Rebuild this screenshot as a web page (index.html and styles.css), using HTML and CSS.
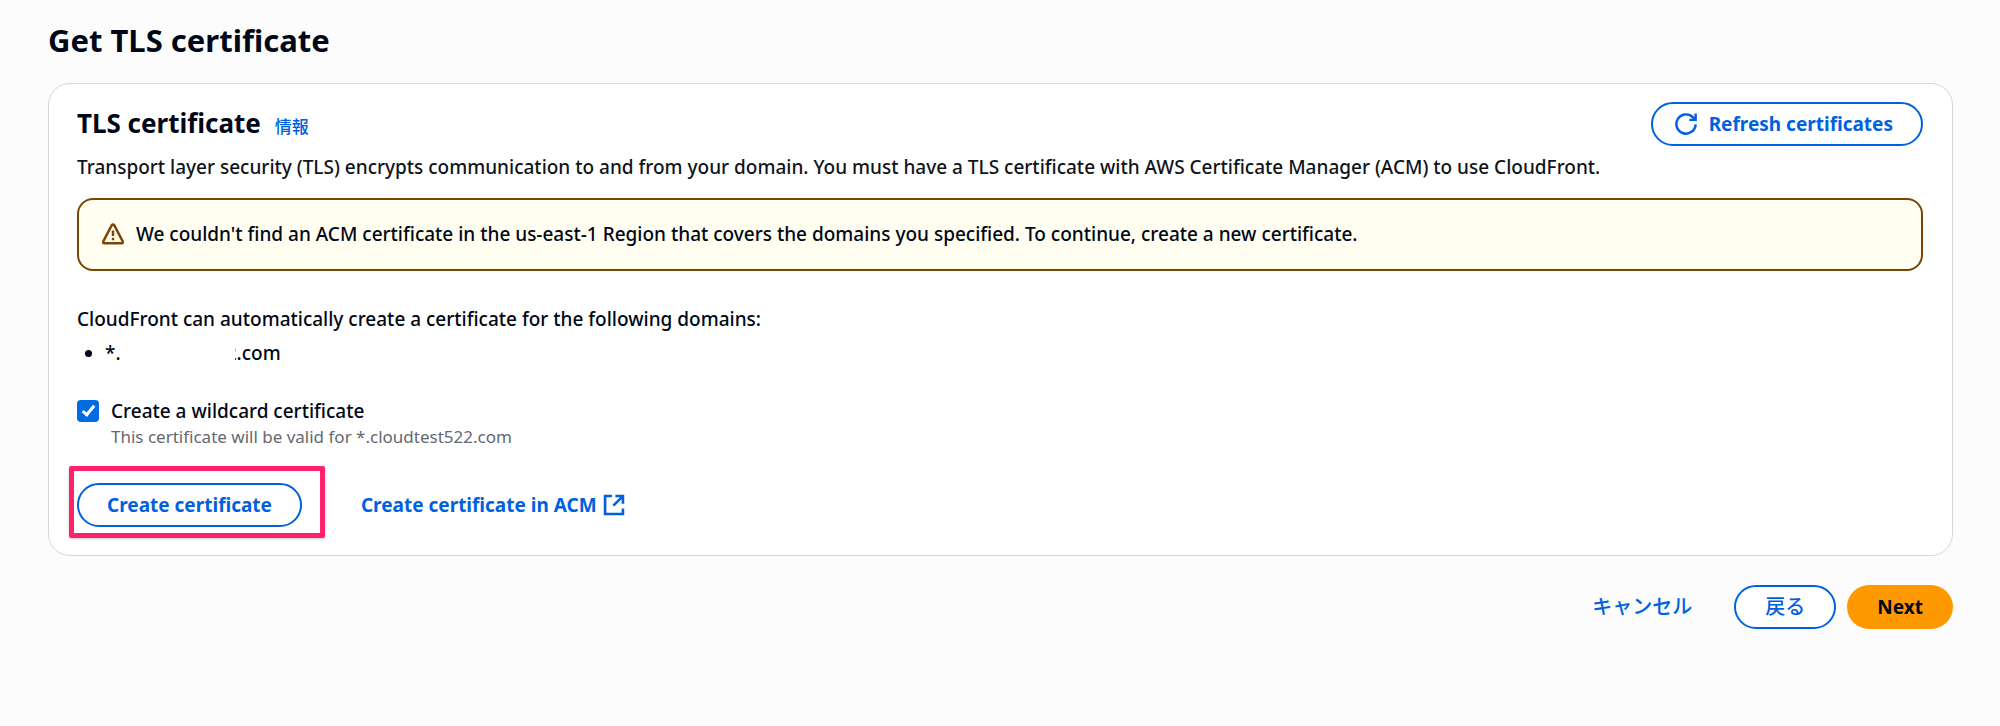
FILE: index.html
```html
<!DOCTYPE html>
<html lang="ja">
<head>
<meta charset="utf-8">
<meta name="viewport" content="width=device-width, initial-scale=1">
<title>Get TLS certificate</title>
<link rel="stylesheet" href="styles.css">
</head>
<body>
<main class="page">
  <h1 class="page-title">Get TLS certificate</h1>
  <section class="card">
    <header class="card-header">
      <div class="card-heading">
        <h2 class="card-title">TLS certificate</h2>
        <a class="info-link" href="#info">情報</a>
      </div>
      <button class="button button-outline" type="button">
        <svg class="icon" viewBox="0 0 16 16" fill="none" stroke="currentColor" stroke-width="1.800" aria-hidden="true"><path d="M15 8.300A7 7 0 1 1 13 3.100L15 5"/><path d="M15 .4V5h-4.600"/></svg>
        Refresh certificates
      </button>
    </header>
    <p class="card-description">Transport layer security (TLS) encrypts communication to and from your domain. You must have a TLS certificate with AWS Certificate Manager (ACM) to use CloudFront.</p>
    <div class="alert" role="alert">
      <svg class="icon" viewBox="0 0 16 16" fill="none" stroke="currentColor" stroke-width="1.800" aria-hidden="true"><path d="M7.100 1.600Q8 .4 8.900 1.600L15 13.200Q15.500 14.600 14.300 14.800H1.700Q.5 14.600 1 13.200Z"/><path d="M8 5.500v4M8 10.800v1.800"/></svg>
      <p class="alert-text">We couldn't find an ACM certificate in the us-east-1 Region that covers the domains you specified. To continue, create a new certificate.</p>
    </div>
    <p class="domains-label">CloudFront can automatically create a certificate for the following domains:</p>
    <ul class="domains">
      <li><span class="domain"><span>*.</span><span class="domain-end"><span class="domain-cut">2</span>.com</span></span></li>
    </ul>
    <div class="option">
      <input class="checkbox" type="checkbox" id="wildcard" aria-describedby="wildcard-hint" checked>
      <div>
        <label class="option-label" for="wildcard">Create a wildcard certificate</label>
        <p class="option-hint" id="wildcard-hint">This certificate will be valid for *.cloudtest522.com</p>
      </div>
    </div>
    <div class="actions">
      <div class="highlight">
        <button class="button button-outline" type="button">Create certificate</button>
      </div>
      <a class="external-link" href="#acm">Create certificate in ACM
        <svg class="icon" viewBox="0 0 16 16" fill="none" stroke="currentColor" stroke-width="1.900" aria-hidden="true"><path d="M6.500 1.500h-5v13h13v-4"/><path d="M9 1.500h5.500V7M14.500 1.500 7.500 8.500"/></svg>
      </a>
    </div>
  </section>
  <footer class="footer">
    <button class="button button-link" type="button">キャンセル</button>
    <button class="button button-outline button-back" type="button">戻る</button>
    <button class="button button-primary" type="button">Next</button>
  </footer>
</main>
</body>
</html>
```
FILE: styles.css
```css
* {
  box-sizing: border-box;
}

body {
  margin: 0;
  background: #fcfcfd;
  color: #000716;
  font: 500 19px/28px "Noto Sans", "Noto Sans CJK JP", sans-serif;
}

h1, h2, p, ul {
  margin: 0;
}

a {
  color: #0061e0;
  text-decoration: none;
}

.page {
  padding: 20px 47px 24px 48px;
}

.page-title {
  margin-bottom: 23px;
  font-size: 31px;
  font-weight: 700;
  line-height: 40px;
}

.card {
  padding: 18px 29px 28px 28px;
  border: 1px solid #d5d7dc;
  border-radius: 22px;
  background: #fff;
}

.card-header {
  display: flex;
  align-items: center;
  justify-content: space-between;
}

.card-heading {
  display: flex;
  align-items: baseline;
  gap: 14px;
}

.card-title {
  font-size: 26px;
  font-weight: 700;
  line-height: 32px;
}

.info-link {
  font-size: 17px;
}

.card-description {
  margin-top: 7px;
  color: #0f141a;
}

.icon {
  width: 22px;
  height: 22px;
  flex: none;
}

.button {
  display: inline-flex;
  align-items: center;
  justify-content: center;
  gap: 12px;
  height: 44px;
  padding: 0 28px;
  border: 2px solid transparent;
  border-radius: 22px;
  background: transparent;
  color: #0061e0;
  font: 700 19px/28px "Noto Sans", "Noto Sans CJK JP", sans-serif;
  white-space: nowrap;
  cursor: pointer;
}

.card-header .button {
  padding: 0 28px 0 22px;
}

.button-outline {
  border-color: #0061e0;
  background: #fff;
}

.button-link,
.button-back {
  padding: 0 29px;
  font-size: 20px;
  font-weight: 500;
}

.button-primary {
  background: #ff9900;
  color: #000716;
}

.alert {
  display: flex;
  align-items: center;
  gap: 12px;
  margin-top: 17px;
  padding: 20px 23px 21px;
  border: 2px solid #7c4400;
  border-radius: 16px;
  background: #fffef0;
  color: #7c4400;
}

.alert-text {
  color: #000716;
}

.domains-label {
  margin-top: 34px;
}

.domains {
  margin-top: 6px;
  padding-left: 28px;
}

.domain {
  display: inline-flex;
  gap: 114px;
}

.domain-end {
  display: inline-flex;
}

.domain-cut {
  display: flex;
  justify-content: flex-end;
  width: 2px;
  overflow: hidden;
}

.option {
  display: flex;
  gap: 12px;
  margin-top: 30px;
}

.checkbox {
  display: grid;
  place-items: center;
  width: 22px;
  height: 22px;
  margin: 3px 0;
  flex: none;
  appearance: none;
  border-radius: 4px;
  background: #006ce0;
}

.checkbox:checked::before {
  content: "";
  width: 4px;
  height: 10px;
  margin-bottom: 3px;
  border: solid #fff;
  border-width: 0 3px 3px 0;
  transform: rotate(40deg);
}

.option-label {
  display: block;
}

.option-hint {
  color: #656871;
  font-size: 17px;
  font-weight: 400;
  line-height: 24px;
}

.actions {
  display: flex;
  align-items: center;
  gap: 59px;
  margin-top: 34px;
}

.highlight {
  position: relative;
  display: flex;
}

/* Callout frame drawn over the button. */
.highlight::after {
  content: "";
  position: absolute;
  inset: -17px -23px -11px -8px;
  border: 5px solid #ff2268;
  border-radius: 2px;
  box-shadow: 0 1px 3px #0003;
  pointer-events: none;
}

.external-link {
  display: inline-flex;
  align-items: center;
  gap: 6px;
  font-weight: 700;
}

.footer {
  display: flex;
  justify-content: flex-end;
  gap: 11px;
  margin-top: 29px;
}
```
